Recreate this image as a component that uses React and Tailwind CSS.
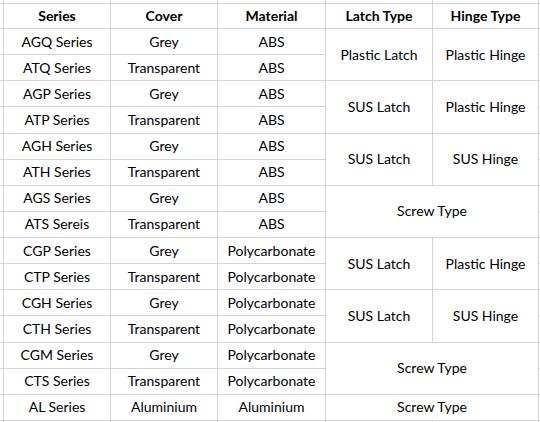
const rows = [
  ["AGQ Series", "Grey", "ABS", { latch: "Plastic Latch", hinge: "Plastic Hinge" }],
  ["ATQ Series", "Transparent", "ABS"],
  ["AGP Series", "Grey", "ABS", { latch: "SUS Latch", hinge: "Plastic Hinge" }],
  ["ATP Series", "Transparent", "ABS"],
  ["AGH Series", "Grey", "ABS", { latch: "SUS Latch", hinge: "SUS Hinge" }],
  ["ATH Series", "Transparent", "ABS"],
  ["AGS Series", "Grey", "ABS", { screw: "Screw Type" }],
  ["ATS Sereis", "Transparent", "ABS"],
  ["CGP Series", "Grey", "Polycarbonate", { latch: "SUS Latch", hinge: "Plastic Hinge" }],
  ["CTP Series", "Transparent", "Polycarbonate"],
  ["CGH Series", "Grey", "Polycarbonate", { latch: "SUS Latch", hinge: "SUS Hinge" }],
  ["CTH Series", "Transparent", "Polycarbonate"],
  ["CGM Series", "Grey", "Polycarbonate", { screw: "Screw Type" }],
  ["CTS Series", "Transparent", "Polycarbonate"],
  ["AL Series", "Aluminium", "Aluminium", { single: "Screw Type" }],
];

const headers = ["Series", "Cover", "Material", "Latch Type", "Hinge Type"];

const Cell = ({ children, className = "" }) => (
  <div className={`bg-white flex items-center justify-center ${className}`}>{children}</div>
);

const Edge = () => <div className="bg-white" />;

export default function App() {
  return (
    <div
      className="w-[540px] h-[422px] bg-[#d4d4d4] grid gap-px grid-cols-[3px_106px_106px_107px_106px_105px_1px] grid-rows-[3px_24px_repeat(15,1fr)_1px] text-[14px] text-black leading-none overflow-hidden"
      style={{ fontFamily: "Lato, 'Liberation Sans', sans-serif" }}
    >
      {Array.from({ length: 7 }).map((_, i) => <Edge key={`t${i}`} />)}

      <Edge />
      {headers.map((h) => (
        <Cell key={h} className="font-bold">{h}</Cell>
      ))}
      <Edge />

      {rows.map(([series, cover, material, extra], i) => [
        <Edge key={`l${i}`} />,
        <Cell key={`s${i}`}>{series}</Cell>,
        <Cell key={`c${i}`}>{cover}</Cell>,
        <Cell key={`m${i}`}>{material}</Cell>,
        extra && extra.latch && <Cell key={`la${i}`} className="row-span-2">{extra.latch}</Cell>,
        extra && extra.hinge && <Cell key={`h${i}`} className="row-span-2">{extra.hinge}</Cell>,
        extra && extra.screw && <Cell key={`sc${i}`} className="row-span-2 col-span-2">{extra.screw}</Cell>,
        extra && extra.single && <Cell key={`si${i}`} className="col-span-2">{extra.single}</Cell>,
        <Edge key={`r${i}`} />,
      ])}

      {Array.from({ length: 7 }).map((_, i) => <Edge key={`b${i}`} />)}
    </div>
  );
}
